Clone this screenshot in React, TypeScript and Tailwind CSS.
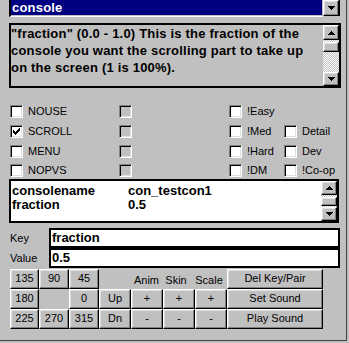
import React from 'react';

const raised =
  'bg-[#c0c0c0] border border-t-white border-l-white border-r-black border-b-black shadow-[inset_-1px_-1px_0_#808080,inset_1px_1px_0_#dfdfdf]';

const checker =
  'bg-[repeating-conic-gradient(#ffffff_0%_25%,#c0c0c0_0%_50%)] bg-[length:2px_2px]';

function Arrow({ up }: { up?: boolean }) {
  return (
    <svg width="7" height="4" viewBox="0 0 7 4" className="block">
      <path
        d={up ? 'M3 0h1v1h1v1h1v1h1v1H0V3h1V2h1V1h1z' : 'M0 0h7v1H6v1H5v1H4v1H3V3H2V2H1V1H0z'}
        fill="#000"
      />
    </svg>
  );
}

function ArrowButton({ up, className = '' }: { up?: boolean; className?: string }) {
  return (
    <div className={`${raised} flex items-center justify-center ${className}`}>
      <Arrow up={up} />
    </div>
  );
}

function CheckBox({ checked, disabled }: { checked?: boolean; disabled?: boolean }) {
  return (
    <span
      className={`relative block shrink-0 w-[13px] h-[13px] border border-t-[#808080] border-l-[#808080] border-r-white border-b-white shadow-[inset_1px_1px_0_#000,inset_-1px_-1px_0_#dfdfdf] ${
        disabled ? 'bg-[#c0c0c0]' : 'bg-white'
      }`}
    >
      {checked && (
        <svg width="7" height="7" viewBox="0 0 7 7" className="absolute left-[2px] top-[2px]">
          <path
            d="M6 0h1v1H6zM5 1h2v1H5zM0 2h1v1H0zM4 2h3v1H4zM0 3h2v1H0zM3 3h3v1H3zM0 4h5v1H0zM1 5h3v1H1zM2 6h1v1H2z"
            fill="#000"
          />
        </svg>
      )}
    </span>
  );
}

type Cell = { label?: string; checked?: boolean; disabled?: boolean } | null;

const flagRows: Cell[][] = [
  [{ label: 'NOUSE' }, { disabled: true }, { label: '!Easy' }, null],
  [{ label: 'SCROLL', checked: true }, { disabled: true }, { label: '!Med' }, { label: 'Detail' }],
  [{ label: 'MENU' }, { disabled: true }, { label: '!Hard' }, { label: 'Dev' }],
  [{ label: 'NOPVS' }, { disabled: true }, { label: '!DM' }, { label: '!Co-op' }],
];

function Btn({ children, className = '' }: { children?: React.ReactNode; className?: string }) {
  return (
    <div className={`${raised} flex items-center justify-center leading-none pb-[1px] ${className}`}>
      {children}
    </div>
  );
}

export default function App() {
  return (
    <div className="w-[349px] h-[343px] bg-[#c0c0c0] overflow-hidden [font-family:Liberation_Sans,Arial,sans-serif] text-black">
      <div className="w-[347px] h-[341px] border-r border-b border-[#404040] pl-[9px]">
        {/* entity class combo */}
        <div className="flex w-[331px] h-[17px]">
          <div className="flex-1 border-l-2 border-black border-b border-b-white bg-[#c0c0c0] pr-[1px]">
            <div className="h-[15px] bg-[#000080] text-white font-bold text-[13px] leading-[15px] pl-[1px] tracking-[0.2px]">
              console
            </div>
          </div>
          <div className="flex h-[16px] border-r border-black">
            <ArrowButton className="w-[16px] h-[16px]" />
          </div>
        </div>

        {/* description */}
        <div className="mt-[6px] flex w-[332px] h-[65px] border-2 border-black">
          <div className="flex-1 text-[13px] font-bold leading-[17px] pr-[3px] tracking-[0.2px]">
            "fraction" (0.0 - 1.0) This is the fraction of the console you want the scrolling part to take up
            on the screen (1 is 100%).
          </div>
          <div className="w-[16px] flex flex-col">
            <ArrowButton up className="h-[15px]" />
            <div className={`flex-1 flex flex-col ${checker}`}>
              <div className="h-[2px]" />
              <div className={`${raised} h-[10px]`} />
            </div>
            <ArrowButton className="h-[14px]" />
          </div>
        </div>

        {/* spawnflags */}
        <div className="mt-[13px] ml-[1px] grid grid-cols-[109px_110px_55px_1fr] grid-rows-[20px_20px_20px_18px] text-[11px]">
          {flagRows.map((row, r) =>
            row.map((c, i) => (
              <div key={`${r}-${i}`} className="flex items-center gap-[5px]">
                {c && <CheckBox checked={c.checked} disabled={c.disabled} />}
                {c?.label && <span className="leading-none">{c.label}</span>}
              </div>
            ))
          )}
        </div>

        {/* key / value list */}
        <div className="flex w-[330px] h-[44px] border-2 border-black bg-white">
          <div className="flex-1 pt-[3px] pl-[1px] text-[13px] font-bold leading-[14px]">
            <div className="flex">
              <span className="w-[116px]">consolename</span>
              <span>con_testcon1</span>
            </div>
            <div className="flex">
              <span className="w-[116px]">fraction</span>
              <span>0.5</span>
            </div>
          </div>
          <div className="w-[16px] flex flex-col">
            <ArrowButton up className="h-[14px]" />
            <div className={`h-[12px] flex flex-col justify-center ${checker}`}>
              <div className={`${raised} h-[9px]`} />
            </div>
            <ArrowButton className="h-[14px]" />
          </div>
        </div>

        {/* key / value fields */}
        <div className="mt-[5px] flex items-center">
          <span className="w-[40px] pl-[1px] text-[11px]">Key</span>
          <div className="w-[291px] h-[20px] border-2 border-black bg-white pl-[1px] text-[13px] font-bold leading-[16px]">
            fraction
          </div>
        </div>
        <div className="flex items-center">
          <span className="w-[40px] pl-[1px] text-[11px]">Value</span>
          <div className="w-[291px] h-[20px] border-2 border-black bg-white pl-[1px] text-[13px] font-bold leading-[16px]">
            0.5
          </div>
        </div>

        {/* buttons */}
        <div className="mt-[1px] ml-[1px] grid grid-cols-[29px_30px_30px_32px_32px_32px_32px_96px] grid-rows-[20px_20px_20px] text-[11px]">
          <Btn>135</Btn>
          <Btn>90</Btn>
          <Btn>45</Btn>
          <div />
          <div className="text-center pt-[3px] pr-[1px]">Anim</div>
          <div className="text-center pt-[3px] pr-[6px]">Skin</div>
          <div className="text-center pt-[3px] pr-[4px]">Scale</div>
          <Btn>Del Key/Pair</Btn>

          <Btn>180</Btn>
          <div />
          <Btn>0</Btn>
          <Btn>Up</Btn>
          <Btn>+</Btn>
          <Btn>+</Btn>
          <Btn>+</Btn>
          <Btn>Set Sound</Btn>

          <Btn>225</Btn>
          <Btn>270</Btn>
          <Btn>315</Btn>
          <Btn>Dn</Btn>
          <Btn>-</Btn>
          <Btn>-</Btn>
          <Btn>-</Btn>
          <Btn>Play Sound</Btn>
        </div>
      </div>
    </div>
  );
}
